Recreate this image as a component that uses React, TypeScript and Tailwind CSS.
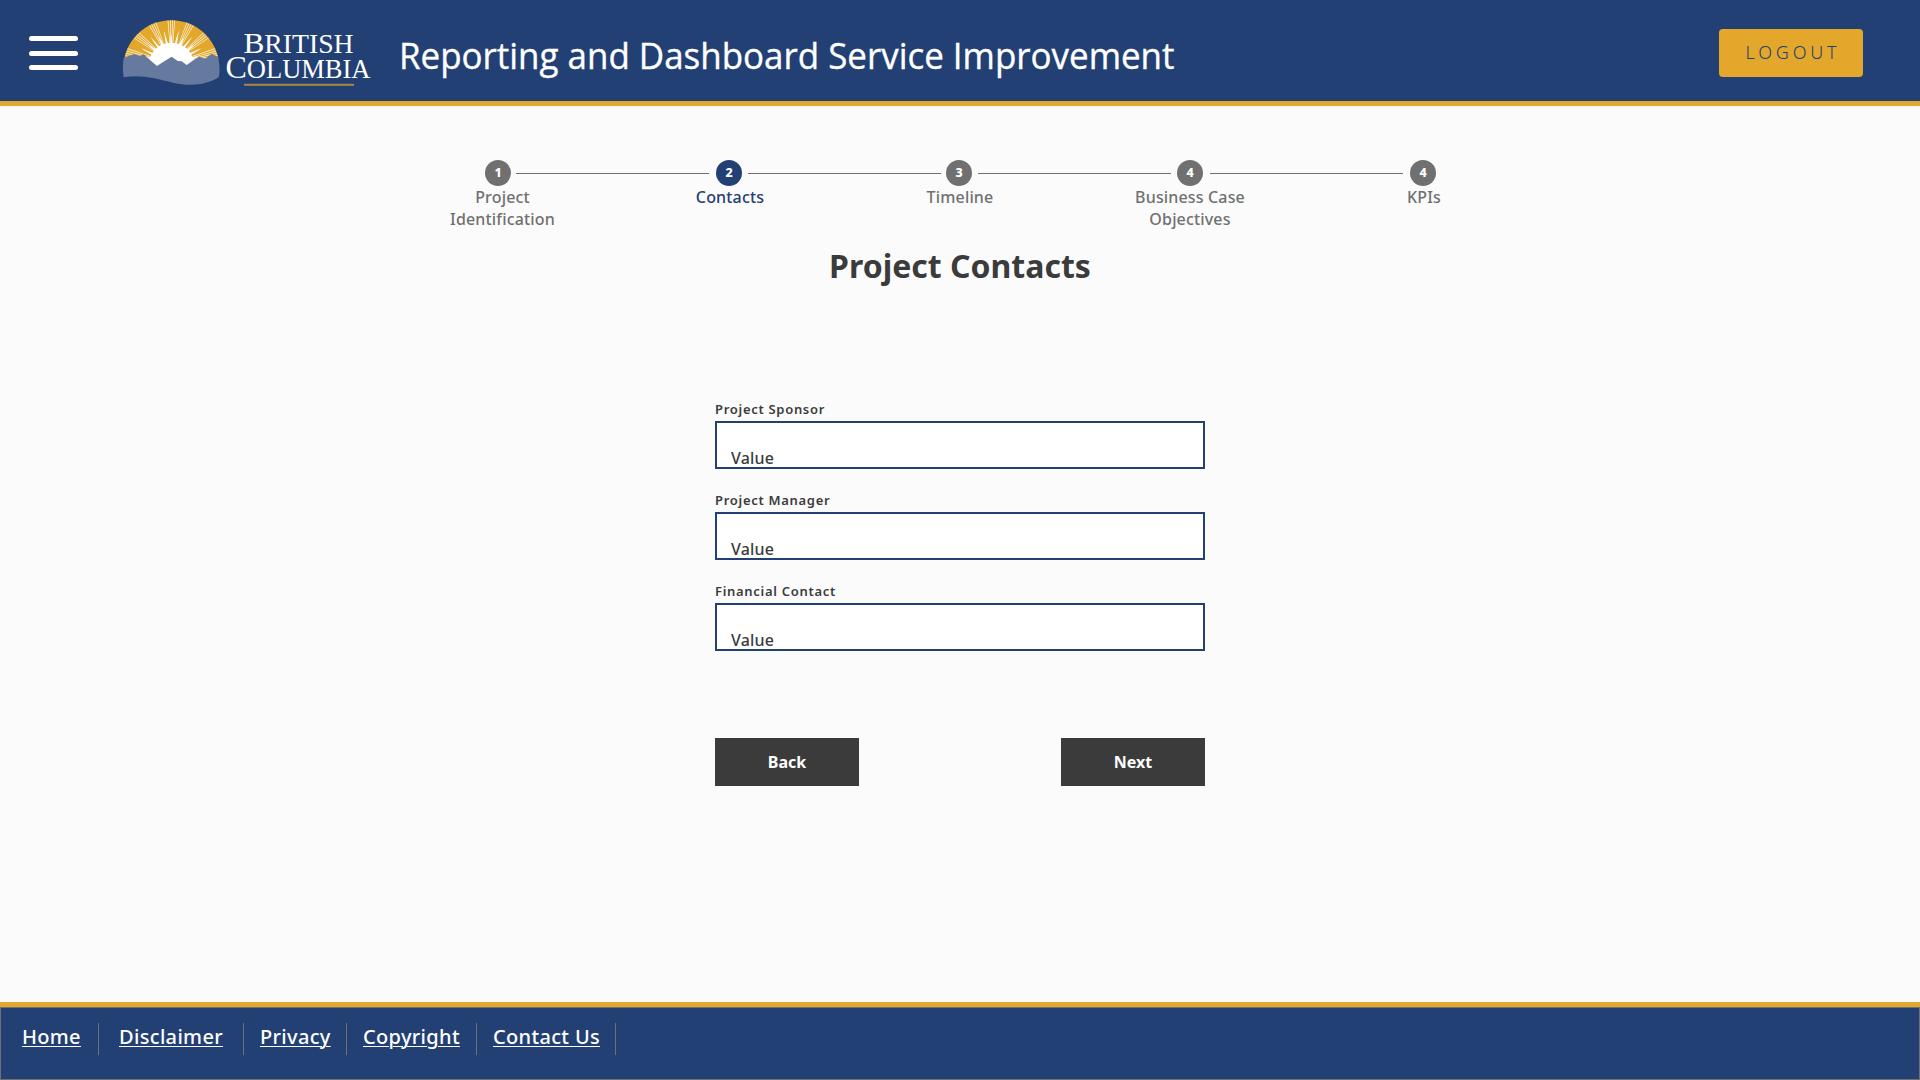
const CX = 184;
const CY = 160;

function ray(angle: number, halfInner: number, halfOuter: number, r0: number, r1: number) {
  const pt = (a: number, r: number) => {
    const t = (a * Math.PI) / 180;
    return `${(CX + r * Math.cos(t)).toFixed(1)},${(CY - r * Math.sin(t)).toFixed(1)}`;
  };
  return [
    pt(angle - halfInner, r0),
    pt(angle - halfOuter, r1),
    pt(angle + halfOuter, r1),
    pt(angle + halfInner, r0),
  ].join(" ");
}

const GROUPS = [14, 39, 64.5, 90, 115.5, 141, 166];
const FINE = [-4.5, -1.5, 1.5, 4.5];
const GAPS = [26.5, 51.7, 77.2, 102.8, 128.3, 153.5];

function SunMark() {
  return (
    <svg className="block" width="98" height="67" viewBox="36 27 294 201">
      <clipPath id="dome">
        <circle cx="184" cy="174.5" r="144" />
      </clipPath>
      <g clipPath="url(#dome)">
        <path d="M40 20H328V143L300 180H70L40 143Z" fill="#e3a82b" />
        <path d="M118 180V160A66 62 0 0 1 250 160V180Z" fill="#fff" />
        {GROUPS.map((g) => (
          <g key={g} fill="#fff">
            <polygon points={ray(g, 4, 0.6, 58, 84)} />
            {FINE.map((f) => (
              <polygon key={f} points={ray(g + f, 0.8, 0.38, 58, 148)} />
            ))}
          </g>
        ))}
        {GAPS.map((g) => (
          <polygon key={g} points={ray(g, 3.8, 0.3, 56, 98)} fill="#fff" />
        ))}
      </g>
      <path
        d="M41 145L58 137L72 132L90 138L101 133L120 150L141 168L158 157L185 140L203 153L215 154L230 165L248 152L267 140L285 146L305 131L324 141C329 160 330 185 326 202C290 225 240 230 190 218C140 206 90 192 41 202C38 180 38 160 41 145Z"
        fill="#667aa0"
      />
    </svg>
  );
}

function Wordmark() {
  return (
    <svg className="block" width="148" height="60" viewBox="0 0 148 60" fill="#fff" fontFamily="'Liberation Serif', serif">
      <text x="19.5" y="26.5" fontSize="26.5" textLength="110" lengthAdjust="spacingAndGlyphs">
        <tspan fontSize="30">B</tspan>RITISH
      </text>
      <text x="1.5" y="51.5" fontSize="26.5" textLength="145" lengthAdjust="spacingAndGlyphs">
        <tspan fontSize="32">C</tspan>OLUMBIA
      </text>
      <rect x="20" y="57.8" width="110" height="2" fill="#a9873c" />
    </svg>
  );
}

const STEPS = [
  { n: "1", lines: ["Project", "Identification"], shift: "translate-x-[4.5px]", w: "w-[231px]", gap: "ml-[5px]" },
  { n: "2", lines: ["Contacts"], shift: "translate-x-[1px]", w: "w-[230px]", gap: "ml-[6px]", active: true },
  { n: "3", lines: ["Timeline"], shift: "translate-x-[1px]", w: "w-[231px]", gap: "ml-[6px]" },
  { n: "4", lines: ["Business Case", "Objectives"], shift: "", w: "w-[233px]", gap: "ml-[7px]" },
  { n: "4", lines: ["KPIs"], shift: "translate-x-[1px]", w: "w-[26px]", gap: "" },
];

function Stepper() {
  return (
    <div className="ml-[485px] flex pt-[54px]">
      {STEPS.map((s, i) => (
        <div key={i} className={"flex items-start " + s.w}>
          <div className="flex w-[26px] shrink-0 flex-col items-center">
            <div
              className={
                "flex size-[26px] items-center justify-center rounded-full pt-px text-[12.5px] font-extrabold text-white " +
                (s.active ? "bg-[#234075]" : "bg-[#707070]")
              }
            >
              {s.n}
            </div>
            <div
              className={
                "text-center text-[16px] leading-[22px] font-medium tracking-[0.16px] whitespace-nowrap " +
                s.shift +
                (s.active ? " text-[#234075]" : " text-[#707070]")
              }
            >
              {s.lines.map((l) => (
                <div key={l}>{l}</div>
              ))}
            </div>
          </div>
          {s.gap && <div className={"mt-[13px] h-px w-[193px] shrink-0 bg-[#707070] " + s.gap} />}
        </div>
      ))}
    </div>
  );
}

function Field({ label }: { label: string }) {
  return (
    <div className="h-[91px]">
      <div className="h-[20px] text-[13px] leading-[17px] font-semibold tracking-[0.7px] text-[#3b3b3b]">{label}</div>
      <div className="h-12 overflow-hidden border-2 border-[#234075] bg-white pt-[24px] pl-[14px] text-[16px] leading-[22px] font-medium tracking-[0.2px] text-[#3b3b3b]">
        Value
      </div>
    </div>
  );
}

const LINKS = [
  { t: "Home", c: "w-[98px] pl-[21px]" },
  { t: "Disclaimer", c: "w-[145px] pl-[20px]" },
  { t: "Privacy", c: "w-[103px] pl-[16px]" },
  { t: "Copyright", c: "w-[130px] pl-[16px]" },
  { t: "Contact Us", c: "w-[139px] pl-[16px]" },
];

export default function App() {
  return (
    <div className="flex h-[1080px] w-[1920px] flex-col overflow-hidden bg-[#fbfbfb] font-['Noto_Sans',sans-serif]">
      <header className="flex h-[106px] shrink-0 items-start border-b-[5px] border-[#e3a82b] bg-[#234075]">
        <div className="mt-[36px] ml-[29px] flex w-[49px] flex-col gap-[9.5px]">
          <div className="h-[5px] rounded-full bg-white" />
          <div className="h-[5px] rounded-full bg-white" />
          <div className="h-[5px] rounded-full bg-white" />
        </div>
        <div className="mt-[19px] ml-[44px]"><SunMark /></div>
        <div className="mt-[26px] ml-[4px]"><Wordmark /></div>
        <h1 className="mt-[28px] ml-[27px] w-[790px] origin-left scale-x-[0.944] font-['Open_Sans',sans-serif] text-[37px] leading-[54px] font-normal whitespace-nowrap text-white [-webkit-text-stroke:0.35px_white]">
          Reporting and Dashboard Service Improvement
        </h1>
        <button className="mt-[29px] mr-[57px] ml-auto flex h-12 w-36 justify-center rounded-[4px] bg-[#e3a82b] pt-[11px] pl-[4px] text-[18px] leading-[25px] font-light tracking-[3.8px] text-[#234075]">
          LOGOUT
        </button>
      </header>
      <main className="flex-1">
        <Stepper />
        <h2 className="mt-[14px] text-center text-[32px] leading-[44px] font-bold text-[#3b3b3b]">Project Contacts</h2>
        <div className="mx-auto mt-[113px] w-[490px]">
          <Field label="Project Sponsor" />
          <Field label="Project Manager" />
          <Field label="Financial Contact" />
          <div className="mt-[64px] flex justify-between text-[16px] leading-[48px] font-bold text-white">
            <button className="h-12 w-36 bg-[#3b3b3b] text-center">Back</button>
            <button className="h-12 w-36 bg-[#3b3b3b] text-center">Next</button>
          </div>
        </div>
      </main>
      <footer className="h-[78px] shrink-0 border-t-[5px] border-[#e3a82b]">
        <div className="flex h-[73px] border border-[#707070] bg-[#234075] pt-[15px]">
          {LINKS.map((l) => (
            <div key={l.t} className={"h-8 border-r border-[#707070] text-[20px] leading-[28px] font-medium tracking-[0.33px] text-white " + l.c}>
              <a className="underline decoration-1 underline-offset-2">{l.t}</a>
            </div>
          ))}
        </div>
      </footer>
    </div>
  );
}
